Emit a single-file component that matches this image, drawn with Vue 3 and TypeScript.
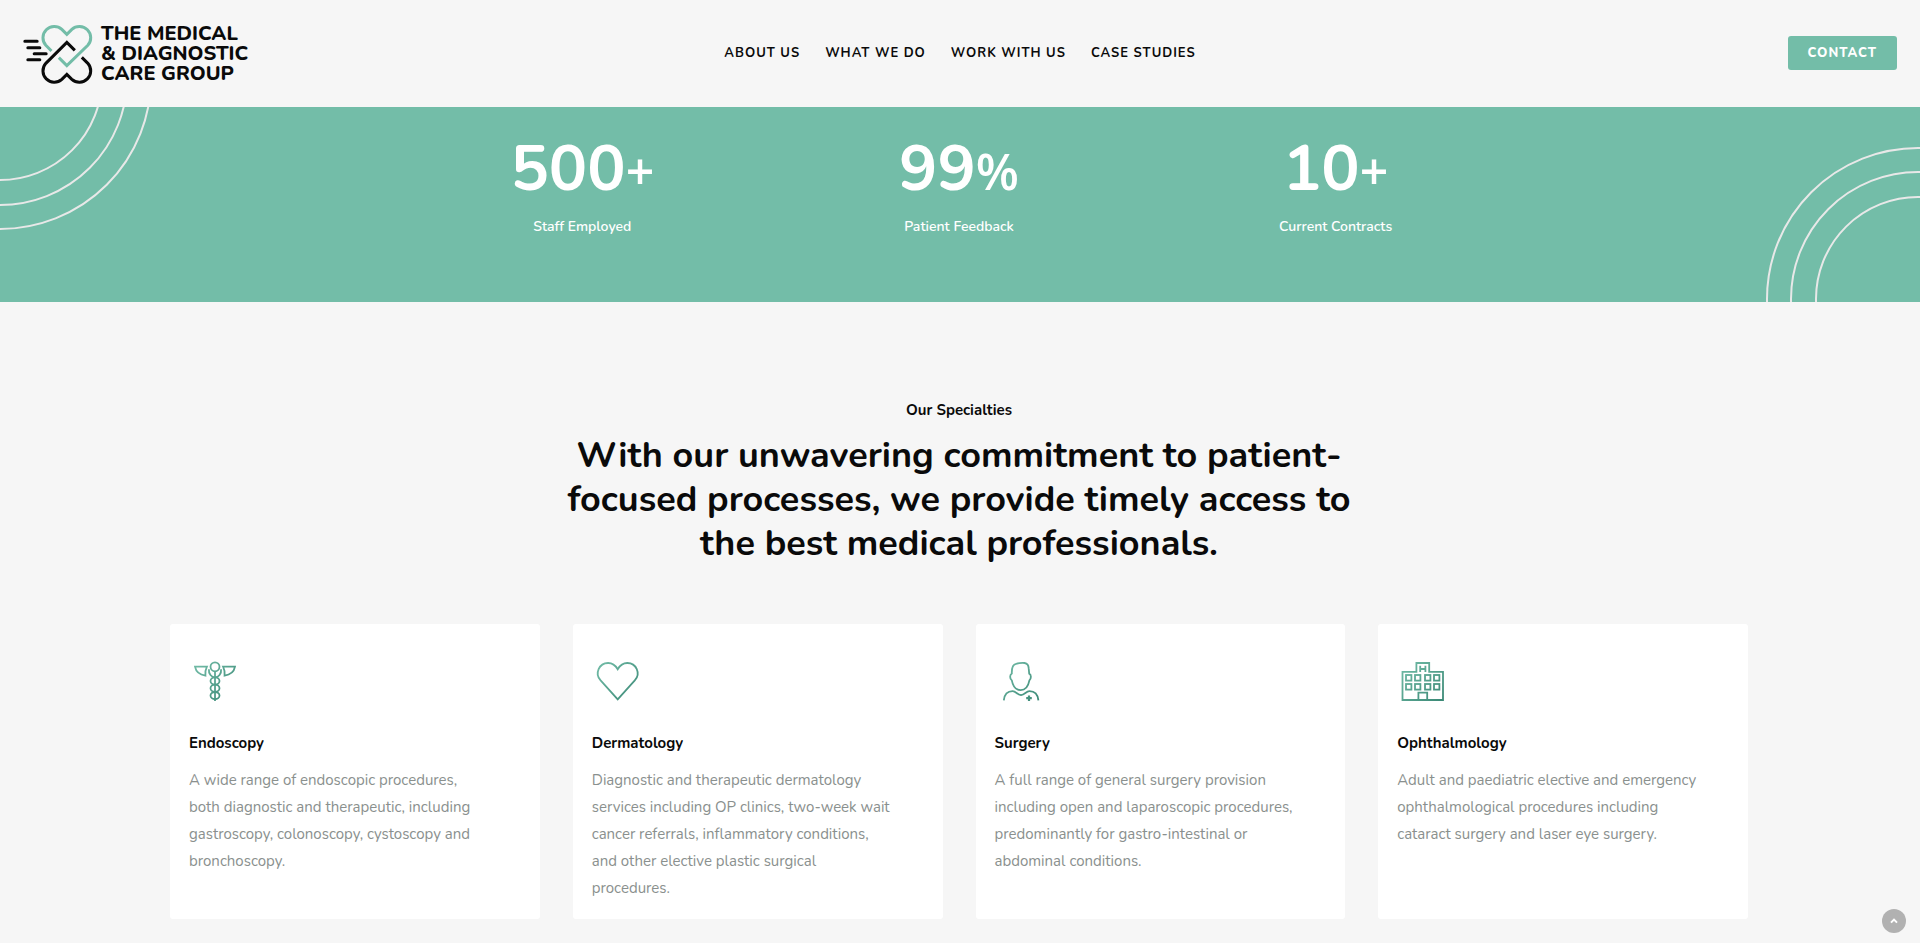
<script setup lang="ts">
interface Stat {
  value: string
  unit: string
  label: string
}

interface Specialty {
  icon: 'caduceus' | 'heart' | 'surgeon' | 'hospital'
  title: string
  text: string
}

const links: string[] = ['About us', 'What we do', 'Work with us', 'Case studies']

const stats: Stat[] = [
  { value: '500', unit: '+', label: 'Staff Employed' },
  { value: '99', unit: '%', label: 'Patient Feedback' },
  { value: '10', unit: '+', label: 'Current Contracts' },
]

const specialties: Specialty[] = [
  {
    icon: 'caduceus',
    title: 'Endoscopy',
    text: 'A wide range of endoscopic procedures, both diagnostic and therapeutic, including gastroscopy, colonoscopy, cystoscopy and bronchoscopy.',
  },
  {
    icon: 'heart',
    title: 'Dermatology',
    text: 'Diagnostic and therapeutic dermatology services including OP clinics, two-week wait cancer referrals, inflammatory conditions, and other elective plastic surgical procedures.',
  },
  {
    icon: 'surgeon',
    title: 'Surgery',
    text: 'A full range of general surgery provision including open and laparoscopic procedures, predominantly for gastro-intestinal or abdominal conditions.',
  },
  {
    icon: 'hospital',
    title: 'Ophthalmology',
    text: 'Adult and paediatric elective and emergency ophthalmological procedures including cataract surgery and laser eye surgery.',
  },
]

const windowColumns = [8, 17, 27, 36]
const windowRows = [19, 28]

function scrollToTop(): void {
  window.scrollTo({ top: 0, behavior: 'smooth' })
}
</script>

<template>
  <div class="page">
    <header class="header">
      <a class="logo" href="#">
        <svg class="logo-mark" viewBox="24 18 212 192" fill="none" stroke-width="9" aria-hidden="true">
          <path
            stroke="#73bda8"
            d="M109 105 L92 88 A34 34 0 0 1 140 40 L155 55 L170 40 A34 34 0 0 1 218 88 L155 149 L131 125"
          />
          <path
            stroke="#0a0a0a"
            d="M179 103 L155 79 L92 142 A34 34 0 0 0 140 190 L155 175 L170 190 A34 34 0 0 0 218 142 L200 124"
          />
          <path
            stroke="#0a0a0a"
            stroke-linecap="round"
            d="M29 76 H66 M38 95 H74 M57 113 H93 M38 131 H74"
          />
        </svg>
        <span class="logo-text">
          <span>THE MEDICAL</span>
          <span>&amp; DIAGNOSTIC</span>
          <span>CARE GROUP</span>
        </span>
      </a>
      <nav class="nav" aria-label="Main">
        <a v-for="link in links" :key="link" href="#">{{ link }}</a>
      </nav>
      <a class="contact" href="#">Contact</a>
    </header>

    <section class="band">
      <svg class="arcs arcs-left" viewBox="0 0 160 130" aria-hidden="true">
        <circle cx="0" cy="-29" r="102" />
        <circle cx="0" cy="-29" r="127" />
        <circle cx="0" cy="-29" r="151" />
      </svg>
      <svg class="arcs arcs-right" viewBox="0 0 160 160" aria-hidden="true">
        <circle cx="158" cy="157" r="102" />
        <circle cx="158" cy="157" r="127" />
        <circle cx="158" cy="157" r="151" />
      </svg>
      <ul class="stats">
        <li v-for="stat in stats" :key="stat.label">
          <p class="stat-value">{{ stat.value }}<span class="stat-unit">{{ stat.unit }}</span></p>
          <p class="stat-label">{{ stat.label }}</p>
        </li>
      </ul>
    </section>

    <main class="specialties">
      <p class="eyebrow">Our Specialties</p>
      <h2 class="headline">
        With our unwavering commitment to patient-focused processes, we provide timely access to the
        best medical professionals.
      </h2>

      <div class="cards">
        <article v-for="item in specialties" :key="item.title" class="card">
          <svg class="icon" viewBox="0 0 50 50" aria-hidden="true">
            <defs>
              <linearGradient
                :id="`tint-${item.icon}`"
                gradientUnits="userSpaceOnUse"
                x1="5"
                y1="5"
                x2="45"
                y2="45"
              >
                <stop offset="0" stop-color="#73bda8" />
                <stop offset="1" stop-color="#3a8875" />
              </linearGradient>
            </defs>
            <g :stroke="`url(#tint-${item.icon})`" fill="none" stroke-width="1.8">
              <template v-if="item.icon === 'caduceus'">
                <circle cx="25" cy="10.8" r="4.5" />
                <path d="M18.9 13.2 C18.5 18 21.4 21.3 25 21.3 C28.6 21.3 31.5 18 31.1 13.2" />
                <path d="M25.01 15.2 L25 45" />
                <ellipse cx="25" cy="25" rx="4.5" ry="3.6" />
                <ellipse cx="25" cy="32.3" rx="4.5" ry="3.6" />
                <ellipse cx="25" cy="39.6" rx="4.5" ry="3.6" />
                <path d="M5 10.7 H16.9 Q15 14.5 15.4 19.6 Q6.5 18.5 5 10.7 Z" />
                <path d="M45 10.7 H33.1 Q35 14.5 34.6 19.6 Q43.5 18.5 45 10.7 Z" />
              </template>
              <path
                v-else-if="item.icon === 'heart'"
                d="M24.7 13.2 C22.2 9 18.8 7 15.2 7 A10.3 10.3 0 0 0 7.6 24.4 L24.7 43.4 L41.8 24.4 A10.3 10.3 0 0 0 34.2 7 C30.6 7 27.2 9 24.7 13.2 Z"
              />
              <template v-else-if="item.icon === 'surgeon'">
                <path
                  d="M15.8 17.5 C15.6 11 16.6 8.4 20 7.8 C23 7 26 6.8 28.6 7 C31.6 7.4 32.6 9.6 32.7 12.4 L33.2 17.6 C35.4 18.6 35.4 22.6 33.4 24.4 C32.2 30.6 29 34.2 24.7 34.2 C20.4 34.2 17 30.6 15.8 24.4 C13.6 22.6 13.6 18.8 15.8 17.5 Z"
                />
                <path
                  d="M7.8 44.4 C8.4 38.6 11.6 35.2 16.6 35.2 C19.8 35.2 21 38.4 25 39.2 C29 38.4 30.2 35.2 33.4 35.2 C38.6 35.2 41.8 38.6 42.4 44.4"
                />
                <path d="M33 39.4 V45 M30.2 42.2 H35.8" stroke-width="2.2" />
              </template>
              <template v-else>
                <path d="M4.5 44 V15.8 H18.4 V7 H31.2 V15.8 H45 V44 Z" />
                <path d="M22.2 9.8 V16 M27.4 9.8 V16 M22.2 13 H27.4" />
                <path d="M20.4 44 V36.6 H29.2 V44" />
                <template v-for="y in windowRows" :key="y">
                  <rect v-for="x in windowColumns" :key="x" :x="x" :y="y" width="5.4" height="5.6" />
                </template>
              </template>
            </g>
          </svg>
          <h3 class="card-title">{{ item.title }}</h3>
          <p class="card-text">{{ item.text }}</p>
        </article>
      </div>
    </main>

    <button class="to-top" type="button" aria-label="Back to top" @click="scrollToTop">
      <svg viewBox="0 0 24 24" aria-hidden="true">
        <path d="M9 13.6 L12 10.6 L15 13.6" />
      </svg>
    </button>
  </div>
</template>

<style>
body {
  background: #f6f6f6;
}
</style>

<style scoped>
.page {
  min-height: 100vh;
  background: #f6f6f6;
  color: #0a0a0a;
  font-family: Nunito, Lato, 'Open Sans', sans-serif;
}

.page *,
.page *::before {
  box-sizing: border-box;
}

.page p,
.page h2,
.page h3,
.page ul {
  margin: 0;
  padding: 0;
}

.header {
  display: grid;
  grid-template-columns: 1fr auto 1fr;
  align-items: center;
  height: 107px;
  padding: 0 23px 2px;
}

.logo {
  display: flex;
  align-items: center;
  justify-self: start;
  gap: 7px;
  padding-top: 2px;
  color: inherit;
  text-decoration: none;
}

.logo-mark {
  width: 71px;
  height: 64px;
}

.logo-text {
  display: flex;
  flex-direction: column;
  font-size: 20px;
  font-weight: 800;
  line-height: 20px;
}

.nav {
  display: flex;
  gap: 25px;
}

.nav a,
.contact {
  font-size: 13px;
  font-weight: 700;
  line-height: 18px;
  letter-spacing: 1px;
  text-decoration: none;
  text-transform: uppercase;
}

.nav a {
  color: #0a0a0a;
}

.contact {
  justify-self: end;
  padding: 8px 20px;
  border-radius: 3px;
  background: #73bda8;
  color: #fff;
  font-weight: 800;
}

.band {
  position: relative;
  overflow: hidden;
  padding: 30px 2px 65px 0;
  background: #73bda8;
  color: #fff;
}

.arcs {
  position: absolute;
  width: 160px;
  fill: none;
  stroke: #e8e8e8;
  stroke-width: 2;
}

.arcs-left {
  top: 0;
  left: 0;
}

.arcs-right {
  right: 0;
  bottom: 0;
}

.page .stats {
  display: grid;
  grid-template-columns: repeat(3, 1fr);
  max-width: 1130px;
  margin: 0 auto;
  list-style: none;
  text-align: center;
}

.stat-value {
  font-size: 64px;
  font-weight: 700;
  line-height: 64px;
}

.stat-unit {
  font-family: 'Open Sans', sans-serif;
  font-size: 50px;
  font-weight: 600;
  line-height: 40px;
}

.page .stat-label {
  margin-top: 16px;
  font-size: 14px;
  font-weight: 600;
  line-height: 20px;
}

.specialties {
  padding: 98px 26px 24px 24px;
}

.eyebrow {
  font-size: 15px;
  font-weight: 700;
  line-height: 20px;
  text-align: center;
}

.page .headline {
  max-width: 810px;
  margin: 14px auto 58px;
  font-size: 36px;
  font-weight: 700;
  line-height: 44px;
  text-align: center;
}

.cards {
  display: grid;
  grid-template-columns: repeat(4, 1fr);
  gap: 33px;
  max-width: 1578px;
  margin: 0 auto;
}

.card {
  padding: 32px 50px 17px 19px;
  border-radius: 3px;
  background: #fff;
}

.icon {
  display: block;
  width: 50px;
  height: 50px;
  margin-left: 1px;
}

.page .card-title {
  margin: 27px 0 14px;
  font-size: 15px;
  font-weight: 700;
  line-height: 20px;
}

.card-text {
  color: #8a908e;
  font-size: 15px;
  line-height: 27px;
}

.to-top {
  position: fixed;
  right: 14px;
  bottom: 10px;
  width: 24px;
  height: 24px;
  padding: 0;
  border: 0;
  border-radius: 50%;
  background: #b1b1b1;
  cursor: pointer;
}

.to-top svg {
  display: block;
  fill: none;
  stroke: #fff;
  stroke-width: 2;
}
</style>
